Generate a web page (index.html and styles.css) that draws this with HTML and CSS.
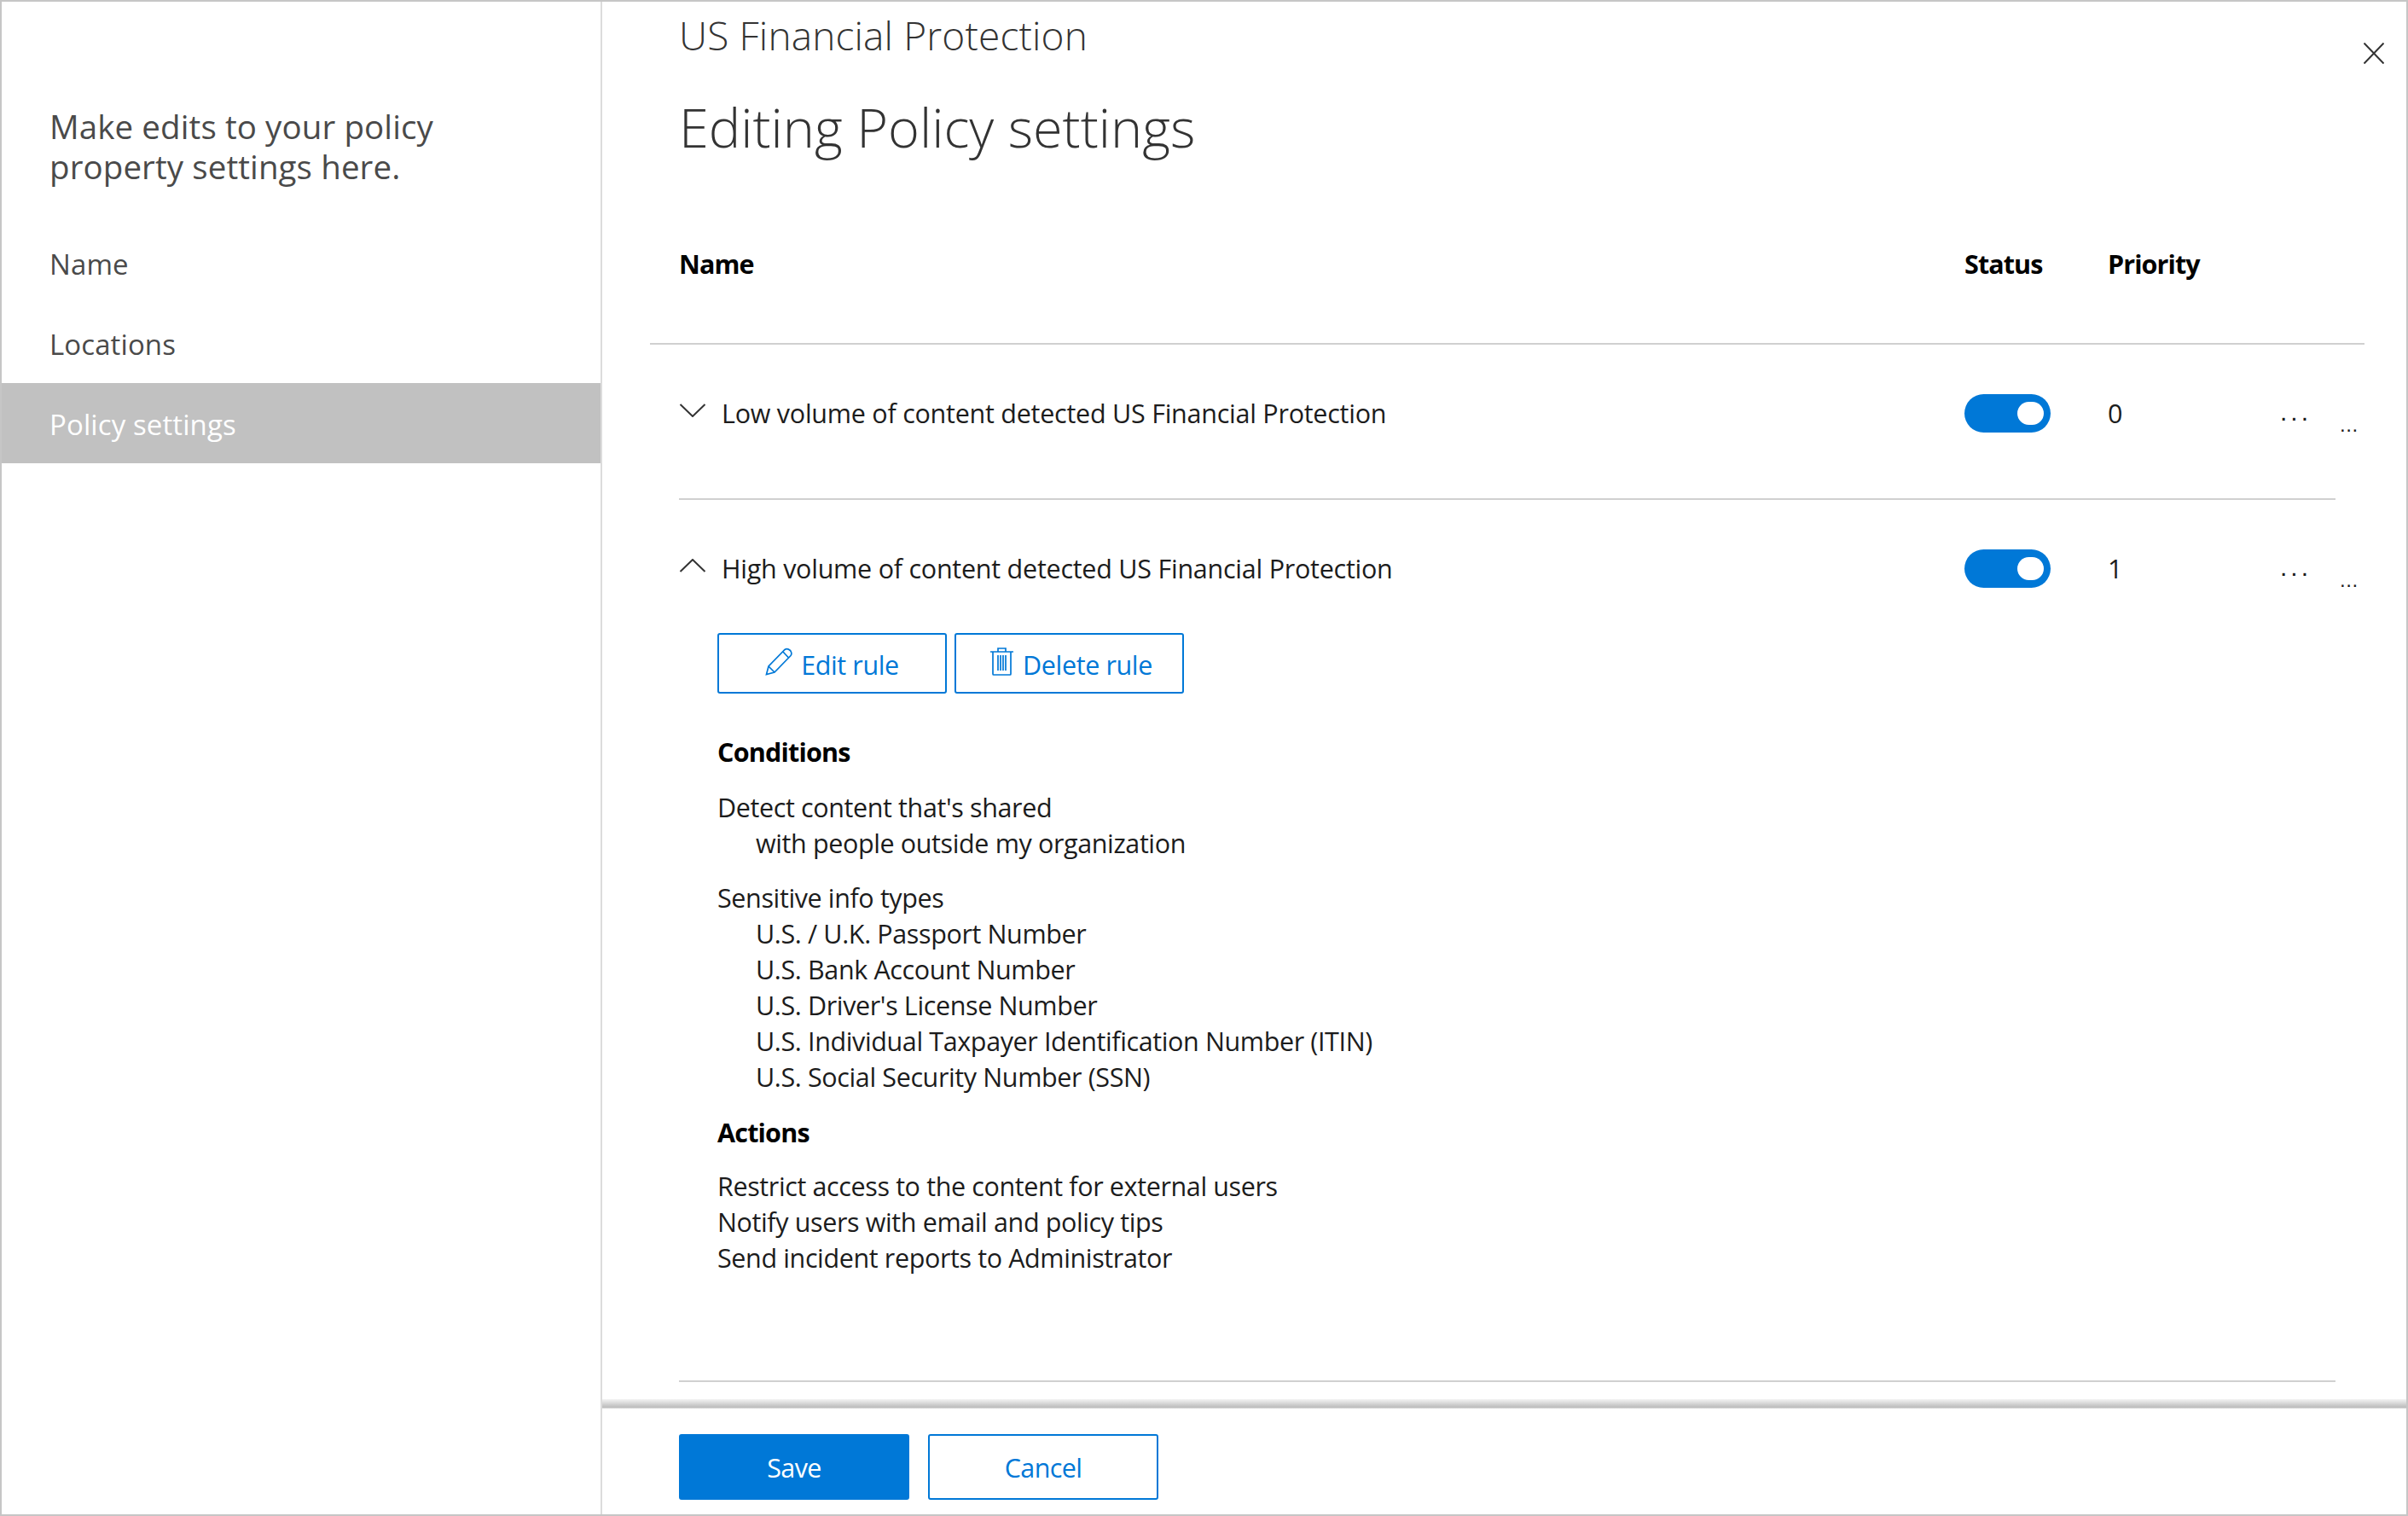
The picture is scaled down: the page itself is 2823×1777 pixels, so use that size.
FILE: index.html
```html
<!doctype html>
<html lang="en">
<head>
  <meta charset="utf-8">
  <title>Editing Policy settings</title>
  <link rel="stylesheet" href="styles.css">
</head>
<body>

  <div class="panel">

    <div class="side">
      <p class="intro">Make edits to your policy<br>property settings here.</p>
      <div class="nav-item">Name</div>
      <div class="nav-item">Locations</div>
      <div class="nav-item active">Policy settings</div>
    </div>

    <div class="main">
      <div class="content">
        <svg class="close" width="24" height="25" viewBox="0 0 24 25"><path d="M0.5 0.5 L23.5 24.5 M23.5 0.5 L0.5 24.5"/></svg>

        <div class="crumb">US Financial Protection</div>
        <h1>Editing Policy settings</h1>

        <div class="table-head">
          <div>Name</div>
          <div>Status</div>
          <div>Priority</div>
        </div>

        <div class="rule">
          <div class="rule-head">
            <div class="rule-name">
              <svg class="chev" width="32" height="16" viewBox="0 0 32 16"><path d="M1.5 1 L16 15 L30.5 1"/></svg>
              Low volume of content detected US Financial Protection
            </div>
            <div><span class="toggle"><span class="knob"></span></span></div>
            <div class="prio">0</div>
            <div class="more"><span class="dots">...</span><span class="dots-small">...</span></div>
          </div>
        </div>

        <div class="rule">
          <div class="rule-head">
            <div class="rule-name">
              <svg class="chev" width="32" height="16" viewBox="0 0 32 16"><path d="M1.5 15 L16 1 L30.5 15"/></svg>
              High volume of content detected US Financial Protection
            </div>
            <div><span class="toggle"><span class="knob"></span></span></div>
            <div class="prio">1</div>
            <div class="more"><span class="dots">...</span><span class="dots-small">...</span></div>
          </div>

          <div class="rule-body">
            <div class="rule-btns">
              <a class="btn-line">
                <svg width="33" height="33" viewBox="0 0 33 33"><path d="M1.5 31.5 L4 22 L23 2.5 Q26 0.5 29.5 3.5 Q32 7 30 9.5 L11 29 Z M4 22 L11 29 M21 5 L27.5 12"/></svg>
                Edit rule
              </a>
              <a class="btn-line btn-delete">
                <svg width="27" height="33" viewBox="0 0 27 33"><path d="M0 5 H27 M9 5 V1 H18 V5 M3 5 V31 Q3 32 4 32 H23 Q24 32 24 31 V5 M9 9 V27 M12 9 V27 M15 9 V27 M18 9 V27"/></svg>
                Delete rule
              </a>
            </div>

            <div class="label">Conditions</div>
            <div class="group">Detect content that's shared</div>
            <div class="sub">with people outside my organization</div>
            <div class="group group-sm">Sensitive info types</div>
            <div class="sub">U.S. / U.K. Passport Number</div>
            <div class="sub">U.S. Bank Account Number</div>
            <div class="sub">U.S. Driver's License Number</div>
            <div class="sub">U.S. Individual Taxpayer Identification Number (ITIN)</div>
            <div class="sub">U.S. Social Security Number (SSN)</div>
            <div class="label label-next">Actions</div>
            <div class="group group-xs">Restrict access to the content for external users</div>
            <div>Notify users with email and policy tips</div>
            <div>Send incident reports to Administrator</div>
          </div>
        </div>
      </div>

      <div class="foot">
        <div class="foot-shadow"></div>
        <div class="foot-btns">
          <a class="btn-save">Save</a>
          <a class="btn-cancel">Cancel</a>
        </div>
      </div>
    </div>

  </div>

</body>
</html>
```

FILE: styles.css
```css
body {
    margin:0;
    background:#fff;
    color:#1c1c1c;
    font-family:"Open Sans", "Noto Sans", sans-serif;
}
.panel {
    display:flex;
    box-sizing:border-box;
    height:1777px;
    border:2px solid #c6c6c6;
    overflow:hidden;
}

/* left column */
.side {
    flex:none;
    width:702px;
    border-right:2px solid #dcdcdc;
    color:#4a4a4a;
}
.intro {
    margin:0 0 42px;
    padding:123px 0 0 56px;
    font-size:38.5px;
    line-height:47px;
    letter-spacing:0.1px;
}
.nav-item {
    box-sizing:border-box;
    height:94px;
    padding:26px 0 0 56px;
    font-size:33px;
    line-height:46px;
    letter-spacing:0.1px;
}
.nav-item.active {
    background:#c1c1c1;
    color:#fff;
}

/* right column */
.main {
    flex:1;
    display:flex;
    flex-direction:column;
    min-width:0;
}
.content {
    position:relative;
    flex:1;
    min-height:0;
    overflow:hidden;
}
.close {
    position:absolute;
    top:48px;
    right:26px;
}
.close path {
    fill:none;
    stroke:#333;
    stroke-width:2;
}
.crumb {
    margin:14px 0 43px 90px;
    font-size:46px;
    line-height:50px;
    letter-spacing:0.15px;
    font-weight:300;
    color:#333;
}
h1 {
    margin:0 0 90px 90px;
    font-size:63px;
    line-height:80px;
    font-weight:300;
    color:#333;
}
.table-head {
    display:grid;
    grid-template-columns:1507px 168px 1fr;
    height:123px;
    margin:0 49px 0 56px;
    padding:0 0 0 34px;
    border-bottom:2px solid #d0d0d0;
    font-size:30.5px;
    line-height:60px;
    font-weight:700;
    letter-spacing:-0.9px;
    color:#000;
}

.rule {
    margin:0 83px 0 90px;
    padding:58px 0 77px;
    border-bottom:2px solid #d0d0d0;
    font-size:30.5px;
    line-height:42px;
    letter-spacing:-0.38px;
}
.rule-head {
    display:grid;
    grid-template-columns:1507px 168px 205px 62px;
    grid-template-rows:45px;
    align-items:center;
    height:45px;
}
.rule-name {
    display:flex;
    align-items:center;
    gap:18px;
    margin-top:-2px;
    letter-spacing:-0.25px;
}
.chev {
    flex:none;
    margin-top:-6px;
}
.chev path {
    fill:none;
    stroke:#333;
    stroke-width:2;
}
.toggle {
    display:flex;
    justify-content:flex-end;
    align-items:center;
    box-sizing:border-box;
    width:101px;
    height:45px;
    padding-right:8px;
    border-radius:23px;
    background:#0078d7;
}
.knob {
    width:31px;
    height:27px;
    border-radius:14px;
    background:#fff;
}
.prio {
    margin-top:-2px;
}
.more {
    display:flex;
    align-items:flex-start;
    height:45px;
    white-space:nowrap;
    font-family:"Liberation Sans", sans-serif;
    letter-spacing:0;
}
.dots {
    flex:none;
    width:70px;
    margin-left:-3px;
    font-size:30px;
    letter-spacing:4px;
}
.dots-small {
    flex:none;
    margin-top:15px;
    font-size:24px;
    letter-spacing:0.6px;
}

.rule-body {
    margin:53px 0 46px;
}
.rule-body > div {
    margin-left:45px;
}
.rule-btns {
    display:flex;
    gap:9px;
    margin-bottom:47px;
}
.btn-line {
    display:flex;
    justify-content:center;
    align-items:center;
    gap:9px;
    box-sizing:border-box;
    width:269px;
    height:71px;
    border:2px solid #0078d7;
    border-radius:3px;
    color:#0078d7;
    padding-top:3px;
}
.btn-line svg {
    margin-top:-8px;
}
.btn-delete {
    padding-left:5px;
    gap:11px;
}
.btn-line path {
    fill:none;
    stroke:#0078d7;
    stroke-width:1.7;
}
.label {
    font-weight:700;
    color:#000;
    letter-spacing:-0.8px;
}
.label-next {
    margin-top:23px;
}
.group {
    margin-top:23px;
}
.group-sm {
    margin-top:22px;
}
.group-xs {
    margin-top:21px;
}
.rule-body > .sub {
    margin-left:90px;
}

/* footer */
.foot {
    flex:none;
    height:135px;
}
.foot-shadow {
    height:11px;
    background:linear-gradient(#f4f4f4, #bdbdbd 85%, #dcdcdc);
}
.foot-btns {
    display:flex;
    gap:22px;
    padding:30px 0 0 90px;
    font-size:30.5px;
    letter-spacing:-0.65px;
}
.btn-save, .btn-cancel {
    display:flex;
    justify-content:center;
    align-items:center;
    box-sizing:border-box;
    width:270px;
    height:77px;
    border:2px solid #0078d7;
    border-radius:3px;
    color:#0078d7;
}
.btn-save {
    background:#0078d7;
    color:#fff;
}
```
